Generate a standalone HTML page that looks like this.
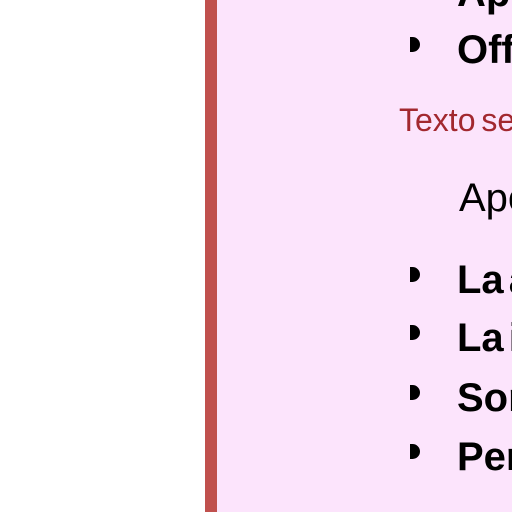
<!DOCTYPE html>
<html><head><meta charset="utf-8"><style>
html,body{margin:0;padding:0;width:512px;height:512px;overflow:hidden;background:#fff;}
.wrap{position:absolute;left:0;top:0;width:512px;height:512px;overflow:hidden;}
.panel{position:absolute;left:205px;top:0;width:307px;height:512px;background:#fce4fc;}
.bar{position:absolute;left:205px;top:0;width:12px;height:512px;background:#c0504d;}
.t{position:absolute;font-family:"Liberation Sans",sans-serif;line-height:1;white-space:nowrap;color:#000;}
.b{font-weight:bold;font-size:40px;left:457px;word-spacing:-6px;}
.bul{position:absolute;left:410px;width:10px;height:15px;background:#000;border-radius:0 8px 8px 0;}
</style></head><body><div class="wrap">
<div class="panel"></div><div class="bar"></div>
<div class="t b" style="top:-27px">Apoyo</div>
<div class="bul" style="top:37px"></div><div class="t b" style="top:30px">Offline</div>
<div class="t" style="left:399px;top:104px;font-size:32px;color:#a2282f;word-spacing:-3px">Texto secundario</div>
<div class="t" style="left:459px;top:178px;font-size:40px">Apertura</div>
<div class="bul" style="top:267px"></div><div class="t b" style="top:260px">La atención</div>
<div class="bul" style="top:325px"></div><div class="t b" style="top:318px">La información</div>
<div class="bul" style="top:385px"></div><div class="t b" style="top:378px">Son</div>
<div class="bul" style="top:444px"></div><div class="t b" style="top:437px">Personas</div>
</div></body></html>
